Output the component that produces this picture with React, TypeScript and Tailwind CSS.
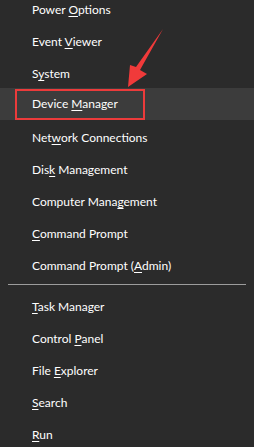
import React from 'react';

type Item = { pre: string; key: string; post: string; active?: boolean };

const GROUP_1: Item[] = [
  { pre: 'Power ', key: 'O', post: 'ptions' },
  { pre: 'Event ', key: 'V', post: 'iewer' },
  { pre: 'S', key: 'y', post: 'stem' },
  { pre: 'Device ', key: 'M', post: 'anager', active: true },
  { pre: 'Net', key: 'w', post: 'ork Connections' },
  { pre: 'Dis', key: 'k', post: ' Management' },
  { pre: 'Computer Mana', key: 'g', post: 'ement' },
  { pre: '', key: 'C', post: 'ommand Prompt' },
  { pre: 'Command Prompt (', key: 'A', post: 'dmin)' },
];

const GROUP_2: Item[] = [
  { pre: '', key: 'T', post: 'ask Manager' },
  { pre: 'Control ', key: 'P', post: 'anel' },
  { pre: 'File ', key: 'E', post: 'xplorer' },
  { pre: '', key: 'S', post: 'earch' },
  { pre: '', key: 'R', post: 'un' },
];

function Row({ item }: { item: Item }) {
  return (
    <div className={item.active ? 'h-8 flex items-center bg-[#3c3c3c]' : 'h-8 flex items-center'}>
      <div
        className={
          item.active
            ? 'ml-[15px] h-[31px] w-[130px] border-2 border-[#ec3b3b] flex items-center pl-[15px]'
            : 'pl-8'
        }
      >
        <span className="text-white text-[12px] leading-none whitespace-nowrap">
          {item.pre}
          <span className="underline underline-offset-2">{item.key}</span>
          {item.post}
        </span>
      </div>
    </div>
  );
}

export default function App() {
  return (
    <div
      className="relative w-[254px] h-[447px] overflow-hidden bg-[#2b2b2b]"
      style={{ fontFamily: 'Lato, "Noto Sans", sans-serif' }}
    >
      <div className="-mt-2 flex flex-col">
        {GROUP_1.map(it => <Row key={it.pre + it.key} item={it} />)}
        <div className="h-[9px] flex items-center px-2">
          <div className="w-full h-px bg-[#9c9c9c]" />
        </div>
        {GROUP_2.map(it => <Row key={it.pre + it.key} item={it} />)}
      </div>

      {/* red annotation arrow */}
      <svg className="absolute left-0 top-0" width="254" height="120" viewBox="0 0 254 120">
        <polygon points="163,29 140,70 147,74 128,87 130,65 136,67" fill="#f03a3a" />
      </svg>
    </div>
  );
}
